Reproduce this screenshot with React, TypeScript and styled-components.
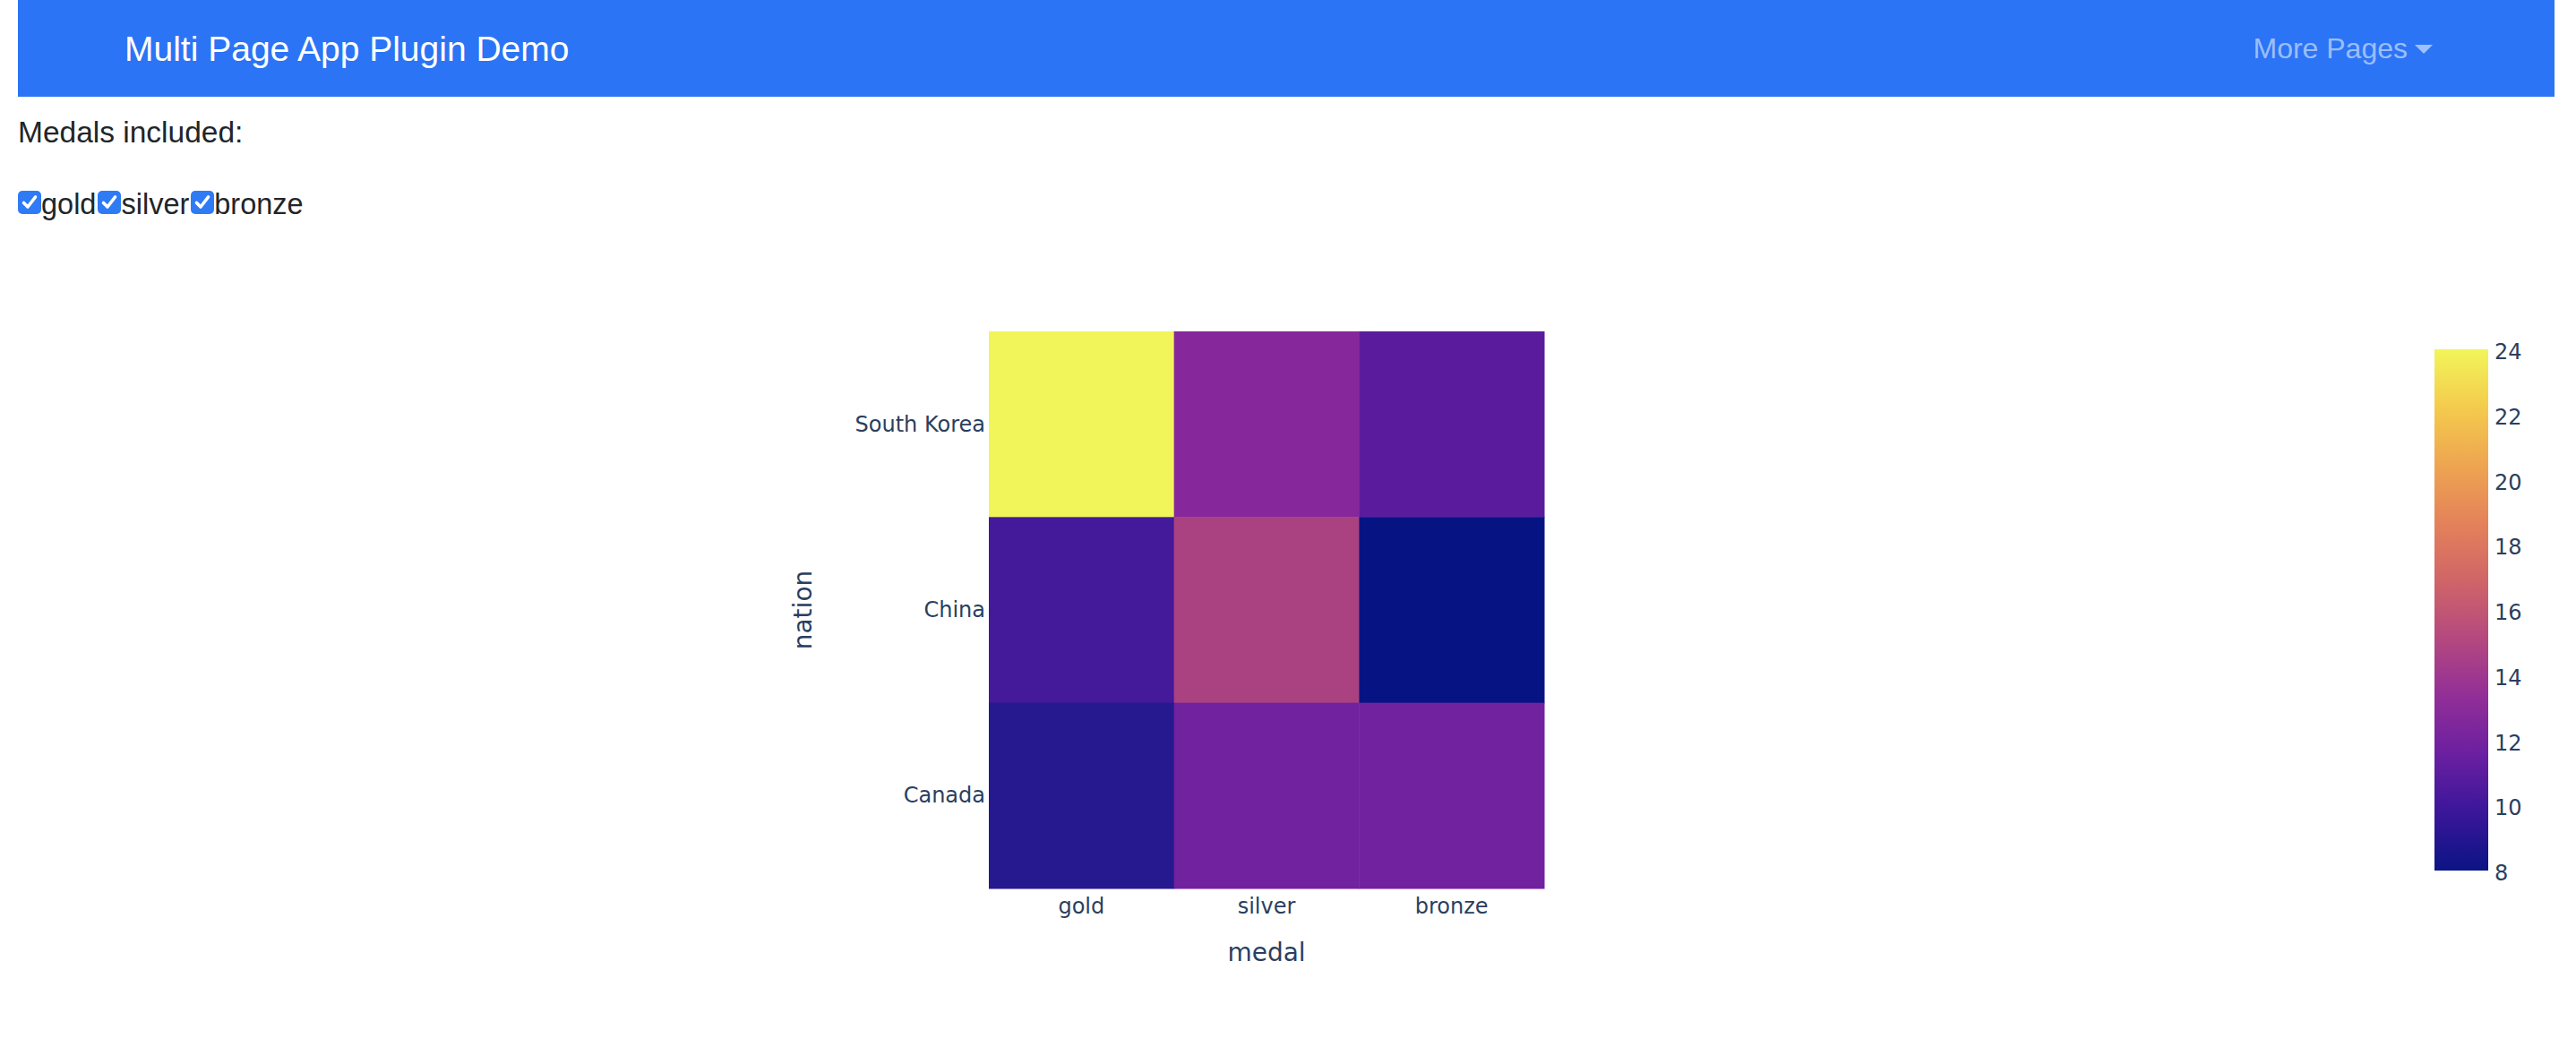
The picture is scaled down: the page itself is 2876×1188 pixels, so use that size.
import React from "react";
import styled, { createGlobalStyle } from "styled-components";

const GlobalStyle = createGlobalStyle`
  html, body {
    margin: 0;
    padding: 0;
    background: #ffffff;
  }
  body {
    font-family: "Liberation Sans", Arial, Helvetica, sans-serif;
    color: #212529;
    font-size: 32px;
    line-height: 1.5;
  }
  * { box-sizing: border-box; }
`;

const Page = styled.div`
  padding: 0 24px 0 20px;
`;

const Navbar = styled.nav`
  height: 108px;
  background: #2b74f5;
  display: flex;
  align-items: center;
  justify-content: space-between;
  padding: 0 136px 0 119px;
`;

const Brand = styled.a`
  color: #ffffff;
  font-size: 39px;
  line-height: 1;
  text-decoration: none;
`;

const DropdownToggle = styled.a`
  color: rgba(255, 255, 255, 0.55);
  font-size: 32px;
  line-height: 1;
  text-decoration: none;
  display: inline-flex;
  align-items: center;
  &::after {
    content: "";
    display: inline-block;
    margin-left: 8px;
    border-top: 10px solid currentColor;
    border-left: 10px solid transparent;
    border-right: 10px solid transparent;
    margin-top: 2px;
  }
`;

const Label = styled.p`
  margin: 16px 0 32px;
  font-size: 33.5px;
  line-height: 48px;
`;

const CheckRow = styled.div`
  display: flex;
  align-items: center;
  height: 48px;
`;

const CheckItem = styled.label`
  display: inline-flex;
  align-items: center;
  margin-right: 2px;
  font-size: 32.5px;
  line-height: 48px;
  cursor: pointer;
`;

const Box = styled.span`
  width: 26px;
  height: 26px;
  border-radius: 5px;
  background: #2f7bf6;
  display: inline-flex;
  align-items: center;
  justify-content: center;
  margin-top: -4px;
`;

const GraphWrap = styled.div`
  width: 100%;
  height: 900px;
`;

const AXIS = "#2a3f5f";
const FONT = "'DejaVu Sans', Verdana, 'Open Sans', sans-serif";

const rows = ["South Korea", "China", "Canada"];
const cols = ["gold", "silver", "bronze"];
const cellColors = [
  ["#f2f55a", "#86289b", "#5a1c9c"],
  ["#44199a", "#aa4282", "#061483"],
  ["#26188f", "#70229f", "#70229f"],
];

const HX = 1084;
const HY = 118;
const HW = 620;
const HH = 622;
const CW = HW / 3;
const CH = HH / 3;

const CBX = 2698;
const CBY = 138;
const CBW = 60;
const CBH = 582;

const plasmaStops = [
  "#0b1484",
  "#3a1699",
  "#6b1fa1",
  "#922e98",
  "#b4487f",
  "#cf6568",
  "#e4825a",
  "#eea551",
  "#f4cb4d",
  "#f2f55a",
];

const ticks = [8, 10, 12, 14, 16, 18, 20, 22, 24];

function Heatmap() {
  return (
    <svg width="2832" height="900">
      <defs>
        <linearGradient id="plasma" x1="0" y1="1" x2="0" y2="0">
          {plasmaStops.map((c, i) => (
            <stop key={i} offset={`${(i / (plasmaStops.length - 1)) * 100}%`} stopColor={c} />
          ))}
        </linearGradient>
      </defs>
      {cellColors.map((r, ri) =>
        r.map((c, ci) => (
          <rect
            key={`${ri}-${ci}`}
            x={HX + ci * CW}
            y={HY + ri * CH}
            width={CW + 0.5}
            height={CH + 0.5}
            fill={c}
          />
        ))
      )}
      {rows.map((r, i) => (
        <text
          key={r}
          x={HX - 4}
          y={HY + CH * i + CH / 2}
          textAnchor="end"
          dominantBaseline="central"
          fontFamily={FONT}
          fontSize="24"
          fill={AXIS}
        >
          {r}
        </text>
      ))}
      {cols.map((c, i) => (
        <text
          key={c}
          x={HX + CW * i + CW / 2}
          y={HY + HH + 20}
          textAnchor="middle"
          dominantBaseline="central"
          fontFamily={FONT}
          fontSize="24"
          fill={AXIS}
        >
          {c}
        </text>
      ))}
      <text
        x={HX + HW / 2}
        y={HY + HH + 71}
        textAnchor="middle"
        dominantBaseline="central"
        fontFamily={FONT}
        fontSize="28"
        fill={AXIS}
      >
        medal
      </text>
      <text
        x={876}
        y={HY + HH / 2}
        textAnchor="middle"
        dominantBaseline="central"
        fontFamily={FONT}
        fontSize="28"
        fill={AXIS}
        transform={`rotate(-90 876 ${HY + HH / 2})`}
      >
        nation
      </text>
      <rect x={CBX} y={CBY} width={CBW} height={CBH} fill="url(#plasma)" />
      {ticks.map((t) => (
        <text
          key={t}
          x={CBX + CBW + 7}
          y={CBY + CBH - ((t - 8) / 16) * CBH + 3}
          dominantBaseline="central"
          fontFamily={FONT}
          fontSize="24"
          fill={AXIS}
        >
          {t}
        </text>
      ))}
    </svg>
  );
}

function Check() {
  return (
    <Box>
      <svg width="22" height="22" viewBox="0 0 22 22">
        <path
          d="M4.5 11.5 L9 16 L17.5 5"
          fill="none"
          stroke="#fff"
          strokeWidth="3.6"
          strokeLinecap="round"
          strokeLinejoin="round"
        />
      </svg>
    </Box>
  );
}

export default function App() {
  return (
    <>
      <GlobalStyle />
      <Page>
        <Navbar>
          <Brand href="#">Multi Page App Plugin Demo</Brand>
          <DropdownToggle href="#">More Pages</DropdownToggle>
        </Navbar>
        <Label>Medals included:</Label>
        <CheckRow>
          {cols.map((c) => (
            <CheckItem key={c}>
              <Check />
              {c}
            </CheckItem>
          ))}
        </CheckRow>
        <GraphWrap>
          <Heatmap />
        </GraphWrap>
      </Page>
    </>
  );
}
